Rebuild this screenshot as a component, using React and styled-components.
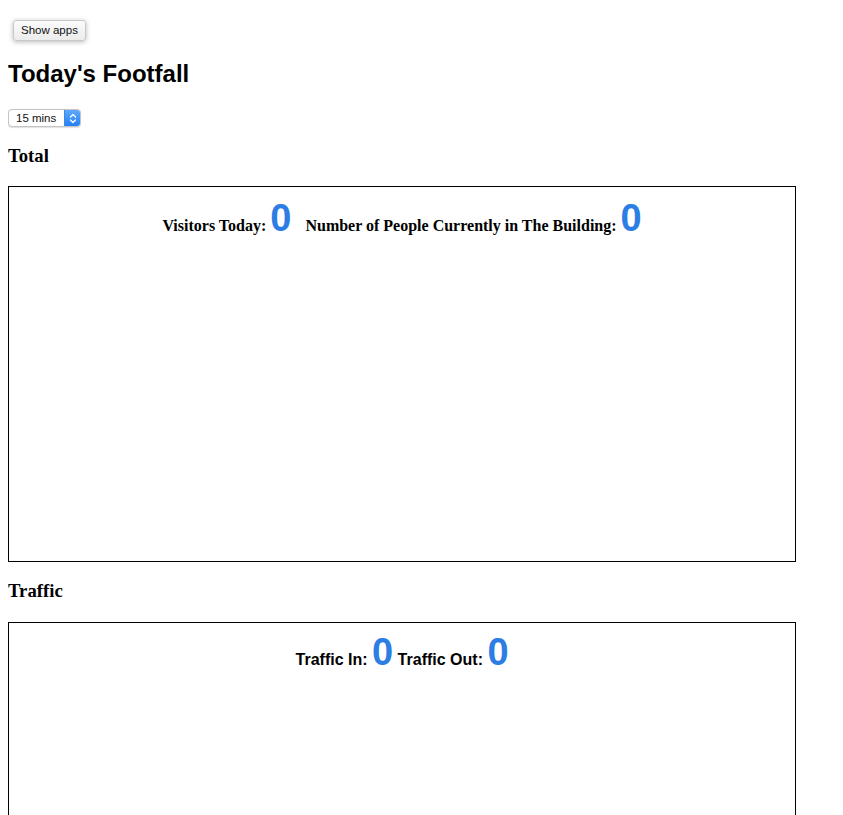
import React from "react";
import styled, { createGlobalStyle } from "styled-components";

const GlobalStyle = createGlobalStyle`
  html, body { background: #ffffff; }
  body {
    margin: 8px;
    font-family: "Liberation Serif", "Times New Roman", serif;
    color: #000;
  }
`;

const Page = styled.div`
  display: block;
`;

const AppsButton = styled.button`
  display: block;
  margin: 12px 0 0 5px;
  padding: 3px 7px;
  height: 21px;
  box-sizing: border-box;
  font-family: "Liberation Sans", Arial, sans-serif;
  font-size: 11.5px;
  line-height: 13px;
  color: #111;
  background: linear-gradient(#fbfbfb, #ececec);
  border: 1px solid #c8c8c8;
  border-radius: 3px;
  box-shadow: 0 1px 5px rgba(0, 0, 0, 0.28);
  cursor: pointer;
`;

const Title = styled.h2`
  margin: 20px 0 22px;
  font-family: "Liberation Sans", Arial, sans-serif;
  font-size: 24px;
  line-height: 26px;
  font-weight: 700;
`;

const SelectWrap = styled.div`
  display: flex;
  width: 73px;
  height: 18px;
  box-sizing: border-box;
  border: 1px solid #c4c4c4;
  border-radius: 4px;
  overflow: hidden;
  background: #fff;
  box-shadow: 0 0.5px 1px rgba(0, 0, 0, 0.12);
`;

const Select = styled.select`
  appearance: none;
  -webkit-appearance: none;
  flex: 1;
  min-width: 0;
  height: 100%;
  border: none;
  outline: none;
  background: transparent;
  padding: 0 0 0 7px;
  margin: 0;
  font-family: "Liberation Sans", Arial, sans-serif;
  font-size: 11.5px;
  line-height: 16px;
  color: #111;
`;

const SelectArrow = styled.span`
  width: 15px;
  height: 100%;
  display: flex;
  align-items: center;
  justify-content: center;
  background: linear-gradient(#5ea9fb, #2580f6);
  border-left: 1px solid #3b87ea;
`;

const SectionTitle = styled.h3`
  margin: 18px 0 ${(p) => p.$below}px;
  font-family: "Liberation Serif", "Times New Roman", serif;
  font-size: 18.72px;
  line-height: 22px;
  font-weight: 700;
`;

const Panel = styled.div`
  width: 95.3%;
  height: 376px;
  box-sizing: border-box;
  border: 1px solid #000;
  padding-top: ${(p) => p.$pad}px;
`;

const StatLine = styled.div`
  margin: 0;
  text-align: center;
  line-height: 44px;
  font-weight: 700;
  font-size: 16px;
  font-family: ${(p) =>
    p.$sans
      ? `"Liberation Sans", Arial, sans-serif`
      : `"Liberation Serif", "Times New Roman", serif`};
`;

const StatGroup = styled.span`
  margin: 0 ${(p) => p.$space || 0}px;
`;

const Num = styled.span`
  font-family: "Liberation Sans", Arial, sans-serif;
  font-size: 38px;
  line-height: 44px;
  font-weight: 700;
  color: #2c7ee4;
`;

const Chevrons = () => (
  <svg width="8" height="11" viewBox="0 0 8 11" fill="none">
    <path d="M1.5 4 L4 1.5 L6.5 4" stroke="#fff" strokeWidth="1.3" strokeLinecap="round" strokeLinejoin="round" />
    <path d="M1.5 7 L4 9.5 L6.5 7" stroke="#fff" strokeWidth="1.3" strokeLinecap="round" strokeLinejoin="round" />
  </svg>
);

export default function App() {
  return (
    <Page>
      <GlobalStyle />
      <AppsButton type="button">Show apps</AppsButton>
      <Title>Today's Footfall</Title>
      <SelectWrap>
        <Select defaultValue="15">
          <option value="15">15 mins</option>
          <option value="30">30 mins</option>
          <option value="60">60 mins</option>
        </Select>
        <SelectArrow>
          <Chevrons />
        </SelectArrow>
      </SelectWrap>
      <SectionTitle $below={19}>Total</SectionTitle>
      <Panel $pad={9}>
        <StatLine>
          <StatGroup $space={5}>
            Visitors Today: <Num>0</Num>
          </StatGroup>{" "}
          <StatGroup $space={5}>
            Number of People Currently in The Building: <Num>0</Num>
          </StatGroup>
        </StatLine>
      </Panel>
      <SectionTitle $below={20}>Traffic</SectionTitle>
      <Panel $pad={7}>
        <StatLine $sans>
          Traffic In: <Num>0</Num> Traffic Out: <Num>0</Num>
        </StatLine>
      </Panel>
    </Page>
  );
}
